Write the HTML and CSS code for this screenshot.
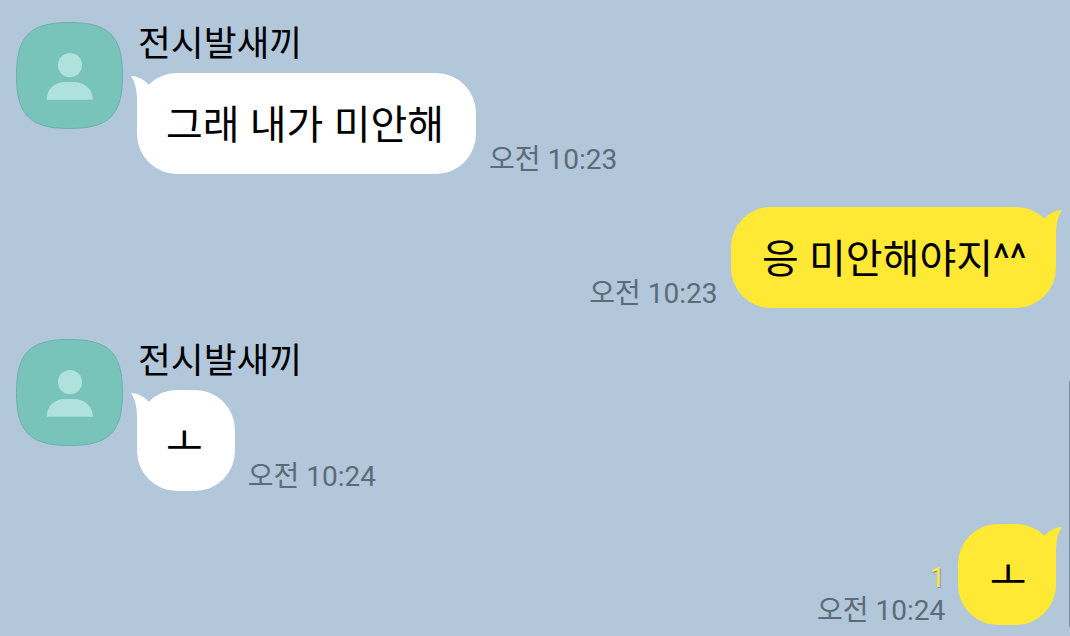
FILE: index.html
```
<!DOCTYPE html>
<html lang="ko">
<head>
    <meta charset="UTF-8">
    <meta name="viewport" content="width=device-width, initial-scale=1.0">
    <title>채팅</title>
    <link rel="stylesheet" href="styles.css">
</head>
<body>
    <main class="chat">
        <!-- 받은 메시지 -->
        <div class="message received">
            <svg class="avatar" viewBox="0 0 108 108">
                <path class="avatar-bg" d="M54 .5C94 .5 107.500 14 107.500 54S94 107.500 54 107.500 .5 94 .5 54 14 .5 54 .5Z"/>
                <circle class="avatar-person" cx="54.500" cy="43.500" r="12.200"/>
                <path class="avatar-person" d="M31 78.500C31 67 39 60.500 50 60.500H58C69 60.500 77.500 67 77.500 78.500Z"/>
            </svg>
            <div class="content">
                <div class="name">전시발새끼</div>
                <div class="line">
                    <div class="bubble">
                        <svg class="tail" viewBox="0 0 30 40"><path d="M0 3Q9 3 17 11L30 22V40H6V26Q6 12 0 3Z"/></svg>
                        <span>그래 내가 미안해</span>
                    </div>
                    <div class="info"><span class="time">오전 10:23</span></div>
                </div>
            </div>
        </div>

        <!-- 보낸 메시지 -->
        <div class="message sent">
            <div class="line">
                <div class="bubble">
                    <svg class="tail" viewBox="0 0 30 40"><path d="M0 3Q9 3 17 11L30 22V40H6V26Q6 12 0 3Z"/></svg>
                    <span>응 미안해야지^^</span>
                </div>
                <div class="info"><span class="time">오전 10:23</span></div>
            </div>
        </div>

        <div class="message received">
            <svg class="avatar" viewBox="0 0 108 108">
                <path class="avatar-bg" d="M54 .5C94 .5 107.500 14 107.500 54S94 107.500 54 107.500 .5 94 .5 54 14 .5 54 .5Z"/>
                <circle class="avatar-person" cx="54.500" cy="43.500" r="12.200"/>
                <path class="avatar-person" d="M31 78.500C31 67 39 60.500 50 60.500H58C69 60.500 77.500 67 77.500 78.500Z"/>
            </svg>
            <div class="content">
                <div class="name">전시발새끼</div>
                <div class="line">
                    <div class="bubble">
                        <svg class="tail" viewBox="0 0 30 40"><path d="M0 3Q9 3 17 11L30 22V40H6V26Q6 12 0 3Z"/></svg>
                        <span>ㅗ</span>
                    </div>
                    <div class="info"><span class="time">오전 10:24</span></div>
                </div>
            </div>
        </div>

        <div class="message sent">
            <div class="line">
                <div class="bubble">
                    <svg class="tail" viewBox="0 0 30 40"><path d="M0 3Q9 3 17 11L30 22V40H6V26Q6 12 0 3Z"/></svg>
                    <span>ㅗ</span>
                </div>
                <div class="info">
                    <span class="unread">1</span>
                    <span class="time">오전 10:24</span>
                </div>
            </div>
        </div>

        <div class="scrollbar"></div>
    </main>
</body>
</html>
```

FILE: styles.css
```
* {
    box-sizing: border-box;
}

body {
    margin: 0;
    background-color: #b2c7da;
    font-family: Roboto, "Noto Sans CJK KR", sans-serif;
    color: #000000;
}

.chat {
    position: relative;
    height: 636px;
    padding: 22px 14px 0 16px;
    overflow: hidden;
}

.message {
    display: flex;
}

.received {
    height: 152px;
    margin-bottom: 33px;
}

.sent {
    justify-content: flex-end;
    margin-bottom: 31px;
}

.avatar {
    width: 107px;
    height: 107px;
    margin-right: 14px;
}

.avatar-bg {
    fill: #79c4ba;
    stroke: #6bafb0;
}

.avatar-person {
    fill: #afe2dc;
}

.name {
    height: 51px;
    padding-left: 1px;
    font-size: 35.700px;
    line-height: 44px;
    white-space: nowrap;
}

.line {
    display: flex;
    align-items: flex-end;
    gap: 13px;
}

.sent .line {
    flex-direction: row-reverse;
}

.bubble {
    position: relative;
    height: 101px;
    padding: 1px 32px 0 29px;
    border-radius: 40px;
    background-color: #ffffff;
    font-size: 40px;
    line-height: 103px;
    white-space: nowrap;
    word-spacing: 0.300px;
}

.sent .bubble {
    padding: 1px 29.500px 0 31.500px;
    background-color: #ffe934;
}

.tail {
    position: absolute;
    top: 0;
    left: -6px;
    width: 30px;
    height: 40px;
    fill: #ffffff;
}

.sent .tail {
    right: -6px;
    left: auto;
    fill: #ffe934;
    transform: scaleX(-1);
}

.info {
    display: flex;
    flex-direction: column;
    margin-bottom: -2px;
    color: #5b6b78;
    font-size: 28px;
    line-height: 32px;
    white-space: nowrap;
}

.sent .info {
    align-items: flex-end;
}

.unread {
    margin-bottom: 1px;
    color: #f8e84e;
    text-shadow: 1px 1px 1px rgba(0, 0, 0, 0.3);
}

.scrollbar {
    position: absolute;
    top: 381px;
    right: 0;
    width: 1px;
    height: 246px;
    background-color: #7890a5;
}
```
